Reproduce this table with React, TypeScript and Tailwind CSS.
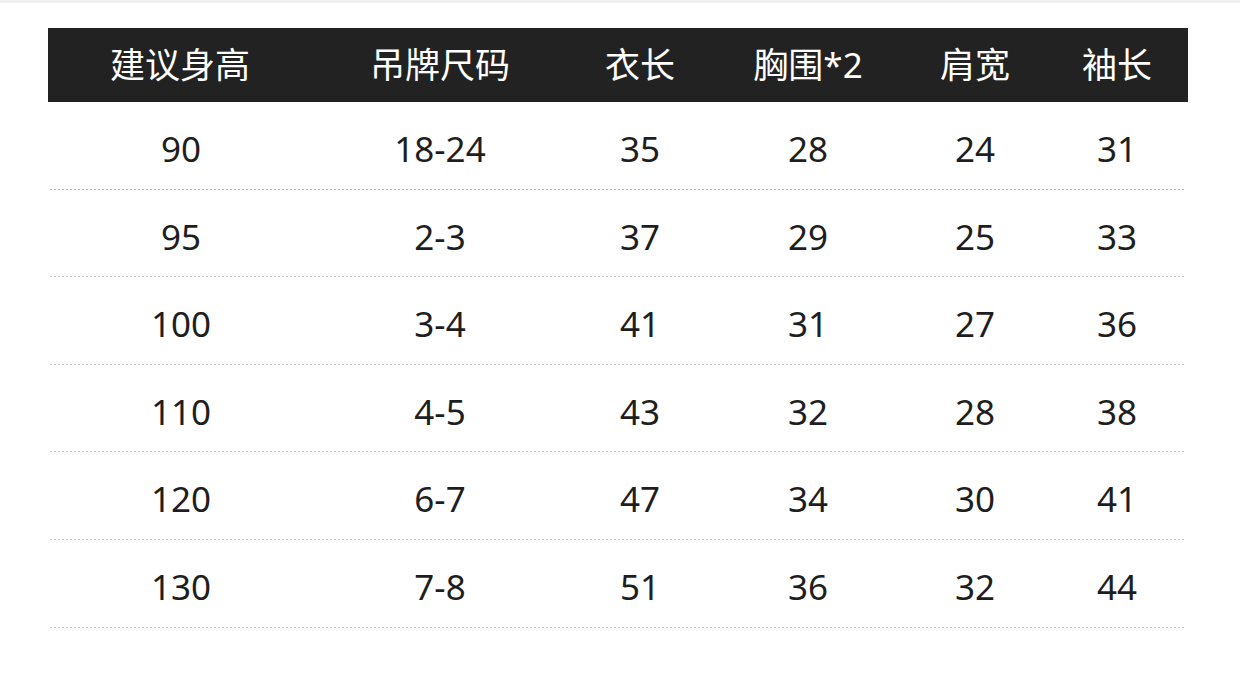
const headers = ['建议身高', '吊牌尺码', '衣长', '胸围*2', '肩宽', '袖长']

const rows = [
  ['90', '18-24', '35', '28', '24', '31'],
  ['95', '2-3', '37', '29', '25', '33'],
  ['100', '3-4', '41', '31', '27', '36'],
  ['110', '4-5', '43', '32', '28', '38'],
  ['120', '6-7', '47', '34', '30', '41'],
  ['130', '7-8', '51', '36', '32', '44'],
]

export default function App() {
  return (
    <div
      className="h-[680px] w-[1240px] bg-white"
      style={{ fontFamily: '"Noto Sans", "Noto Sans CJK SC", sans-serif' }}
    >
      <div className="h-[3px] bg-[#f0f0f0]" />
      <div className="ml-[48px] mt-[25px] w-[1140px]">
        <div className="grid h-[74px] grid-cols-[264px_256px_144px_192px_142px_142px] items-center bg-[#222222] text-[35px] text-white">
          {headers.map(h => (
            <div key={h} className="pt-[1px] text-center">{h}</div>
          ))}
        </div>
        <div className="px-[2px]">
          {rows.map((row, i) => (
            <div key={i} className="flex h-[87.6px] flex-col">
              <div className="grid flex-1 grid-cols-[262px_256px_144px_192px_142px_142px] items-center text-[35px] text-[#1e1e1e]">
                {row.map((cell, j) => (
                  <div key={j} className="pt-[8px] text-center">{cell}</div>
                ))}
              </div>
              <div className="h-px bg-[linear-gradient(to_right,#bdbdbd_50%,transparent_50%)] bg-[length:4px_1px] bg-repeat-x" />
            </div>
          ))}
        </div>
      </div>
    </div>
  )
}
